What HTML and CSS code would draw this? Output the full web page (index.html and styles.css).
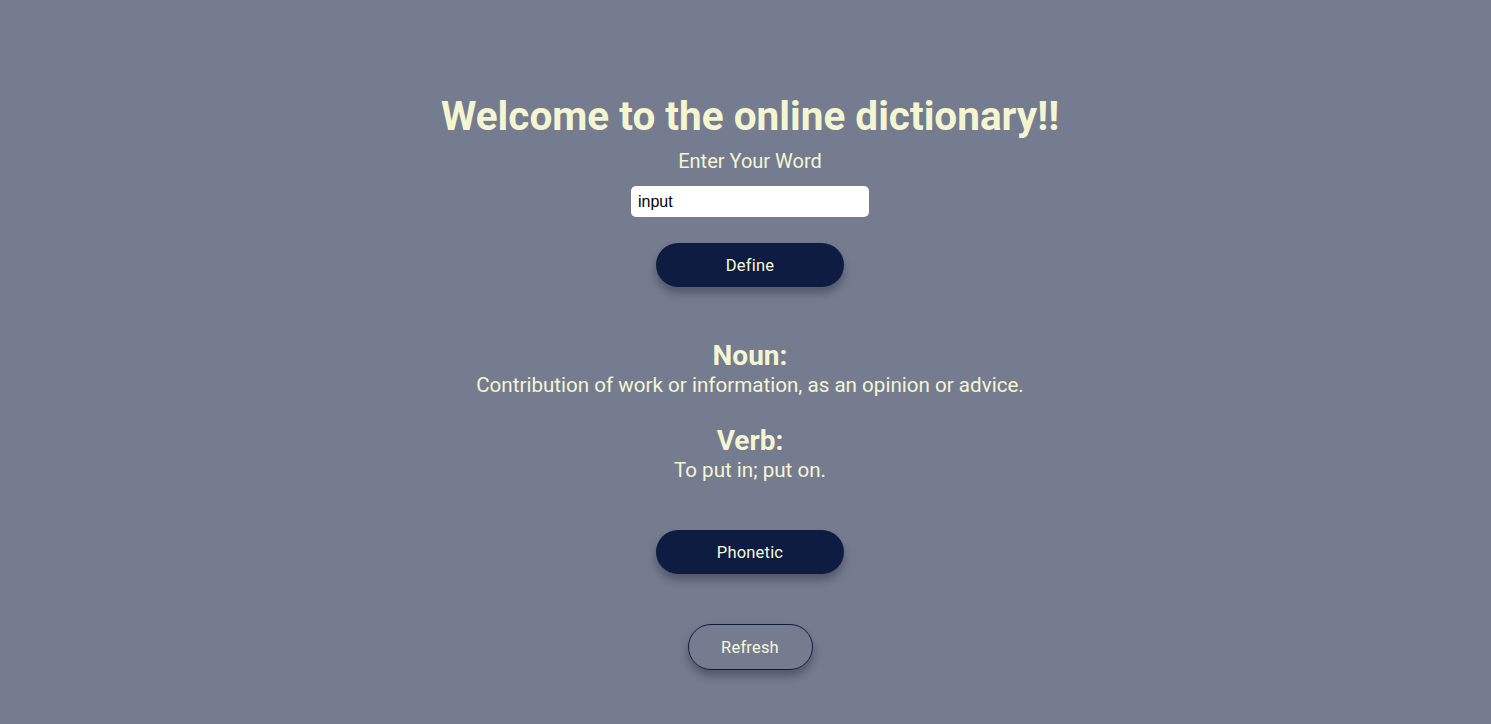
FILE: index.html
```html
<!DOCTYPE html>
<html lang="en">
<head>
<meta charset="utf-8">
<title>Online Dictionary</title>
<link rel="stylesheet" href="styles.css">
</head>
<body>
<main class="app">
  <h1 class="title">Welcome to the online dictionary!!</h1>
  <label class="label" for="word">Enter Your Word</label>
  <input class="word-input" id="word" type="text" value="input">
  <button class="btn btn-solid define">Define</button>
  <section class="defs">
    <div class="def">
      <h2 class="pos">Noun:</h2>
      <p class="meaning">Contribution of work or information, as an opinion or advice.</p>
    </div>
    <div class="def">
      <h2 class="pos">Verb:</h2>
      <p class="meaning">To put in; put on.</p>
    </div>
  </section>
  <button class="btn btn-solid phonetic">Phonetic</button>
  <button class="btn btn-outline refresh">Refresh</button>
</main>
</body>
</html>
```
FILE: styles.css
```css
html, body {
  margin: 0;
  padding: 0;
}
body {
  background: #757c90;
  font-family: Roboto, "Liberation Sans", sans-serif;
  color: #f4f6d2;
  min-height: 724px;
}
.app {
  display: flex;
  flex-direction: column;
  align-items: center;
  padding-top: 93px;
  padding-left: 9px;
}
.title {
  margin: 0;
  font-size: 40.5px;
  font-weight: 700;
  line-height: 46px;
}
.label {
  margin-top: 10px;
  font-size: 20px;
  line-height: 24px;
}
.word-input {
  margin-top: 13px;
  width: 238px;
  height: 31px;
  box-sizing: border-box;
  border: none;
  border-radius: 5px;
  background: #fff;
  padding: 0 7px;
  font-family: "Liberation Sans", Arial, sans-serif;
  font-size: 16px;
  color: #000;
}
.btn {
  font-family: inherit;
  font-size: 16.5px;
  letter-spacing: 0.2px;
  color: #f6f8dc;
  border-radius: 23px;
  cursor: pointer;
  box-shadow: 0 6px 8px rgba(40, 44, 60, 0.45);
}
.btn-solid {
  width: 188px;
  height: 44px;
  background: #0e1c42;
  border: none;
}
.define {
  margin-top: 26px;
}
.defs {
  margin-top: 54px;
  display: flex;
  flex-direction: column;
  align-items: center;
  gap: 27px;
}
.def {
  display: flex;
  flex-direction: column;
  align-items: center;
}
.pos {
  margin: 0;
  font-size: 28px;
  font-weight: 700;
  line-height: 30px;
}
.meaning {
  margin: 0;
  font-size: 20.6px;
  line-height: 28px;
}
.phonetic {
  margin-top: 46px;
}
.refresh {
  margin-top: 50px;
  width: 125px;
  height: 46px;
  background: transparent;
  border: 1px solid #0e1c42;
}
```
